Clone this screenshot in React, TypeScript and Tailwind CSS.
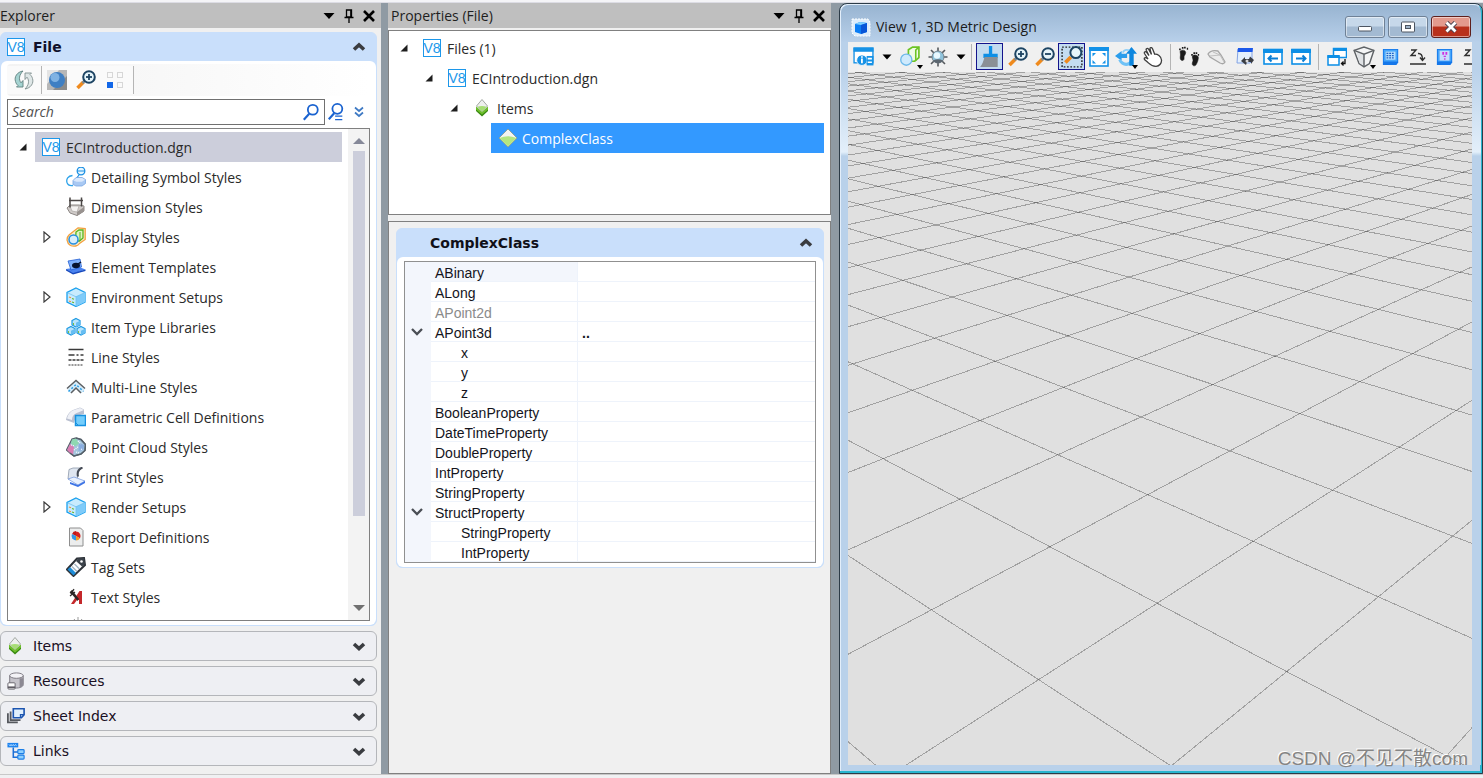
import React from "react";

type Kids = { children: React.ReactNode };

const ui = "font-['Open_Sans','Noto_Sans',sans-serif]";

function Svg({ size = "size-5", box = "0 0 20 20", children }: { size?: string; box?: string } & Kids) {
  return (
    <svg viewBox={box} className={`${size} shrink-0`} fill="none" aria-hidden="true">
      {children}
    </svg>
  );
}

function V8Icon() {
  return (
    <span className="flex size-[18px] shrink-0 items-center justify-center overflow-hidden border border-[#1c97ea] bg-white font-['Liberation_Sans',sans-serif] text-[14px] font-normal leading-none text-[#1c97ea]">
      V8
    </span>
  );
}

function ItemsIcon() {
  return (
    <Svg box="0 0 16 20" size="h-5 w-4">
      <path d="M2 9.500l6 4.500 6-4.500v3.500l-6 5.500L2 13z" fill="#3a8a12" />
      <path d="M2 8.500l6 5 6-5v3l-6 5-6-5z" fill="#6fc02c" />
      <path d="M8 1.500l5.500 6.500L8 13.500 2.500 8z" fill="#eef0ee" stroke="#a3a8a3" />
      <path d="M3.500 8.800Q8 7 12.500 8.800L8 13.500z" fill="#a6de73" />
    </Svg>
  );
}

function ClassIcon() {
  return (
    <Svg>
      <path d="M10 1l9 9-9 9-9-9z" fill="#f3f4f2" stroke="#83907a" strokeWidth=".7" />
      <path d="M1.500 10Q10 6.500 18.500 10L10 18.500z" fill="#b4e681" />
    </Svg>
  );
}

function Magnifier({ sign }: { sign?: "plus" | "minus" }) {
  return (
    <>
      <path d="M7.500 12L1.500 18" stroke="#ef8a1d" strokeWidth="3.600" />
      <path d="M9 10.500L6.500 13" stroke="#7d8b96" strokeWidth="2.500" />
      <circle cx="13" cy="7" r="5.800" fill="#e6f5fb" stroke="#1d4463" strokeWidth="2" />
      {sign && <path d="M10 7h6" stroke="#1d4463" strokeWidth="1.800" />}
      {sign === "plus" && <path d="M13 4v6" stroke="#1d4463" strokeWidth="1.800" />}
    </>
  );
}

function CubeIcon() {
  return (
    <Svg>
      <path d="M10 1l9 4.500v9.500l-9 4.500L1 15V5.500z" fill="#c8ebfd" stroke="#1aa0ee" strokeWidth="1.300" />
      <path d="M10 9.500L19 5.500V15l-9 4.500z" fill="#7fcbf9" />
      <path d="M1.500 5.800l8.500 4 8.500-4M10 9.800V19" stroke="#6fc0f0" strokeWidth=".8" />
      <path d="M3 10l2 .8M3 14l2 .8" stroke="#ef9240" strokeWidth="1.200" />
      <path d="M6 11.500l2 .8M6 15l2 .8" stroke="#67b52b" strokeWidth="1.200" />
    </Svg>
  );
}

function SmallCube({ x, y }: { x: number; y: number }) {
  return (
    <g transform={`translate(${x} ${y})`}>
      <path d="M5 .5l4 2v4.500l-4 2-4-2V2.500z" fill="#b9e4fb" stroke="#1a98e2" strokeWidth="1.200" />
      <path d="M5 4.800l4-2v4.200l-4 2z" fill="#66bdf2" />
      <path d="M2.500 5v2" stroke="#7cc142" />
    </g>
  );
}

const treeIcons: Record<string, React.ReactNode> = {
  detailing: (
    <Svg>
      <path d="M6.500 8.500C2 9 0 12 1 15.500c.8 2.500 3 3.500 6 3" stroke="#2ea3ea" strokeWidth="1.300" />
      <circle cx="15" cy="4" r="3.800" fill="#e6f6ff" stroke="#1a8fe3" strokeWidth="1.300" />
      <path d="M11.500 4h7M13 8l-3 4" stroke="#1a8fe3" strokeWidth="1.200" />
      <path d="M7 13.500l3-3h6l3.500 2v4l-3.500 2.500H10l-3-1.500z" fill="#a9c9f3" stroke="#7aa7e2" strokeWidth=".8" />
      <path d="M7.500 13.500l3-2.500h5.500l3 1.800-3 2h-5.500z" fill="#dbe9fc" />
    </Svg>
  ),
  dimension: (
    <Svg>
      <path d="M1 11l3-3h9l5 1v5l-7 4.500L4 16z" fill="#cfcac8" stroke="#8d8885" />
      <path d="M4 9h9l-2 6-5-1z" fill="#f4f2f1" stroke="#a29d9b" strokeWidth=".6" />
      <path d="M11 15v4l7-4.500V10z" fill="#98928f" />
      <path d="M4 .5v10M15.500.5v9M3 3.500h14" stroke="#4b4746" strokeWidth="1.500" />
    </Svg>
  ),
  display: (
    <Svg>
      <path d="M12 .8l7.200.700v11l-5.700 4C12 19 8 20 4.500 18.500.500 16 0 11 3 8z" fill="#fdeccf" stroke="#f2a13e" strokeWidth="1.300" />
      <path d="M10 5l3-2h4v8l-3.500 3h-4z" fill="#ddf4c5" stroke="#58b41c" strokeWidth="1.300" />
      <path d="M14 5v9" stroke="#58b41c" />
      <circle cx="7.500" cy="12.500" r="4.500" fill="#d8eefc" stroke="#258fe0" strokeWidth="1.500" />
    </Svg>
  ),
  element: (
    <Svg>
      <path d="M0 12l13-2 6.500 2.500L7 17z" fill="#4a83ef" />
      <path d="M0 12l7 4v1.500L0 13.500zM7 16l12.500-3.500V14L7 17.500z" fill="#1648bd" />
      <path d="M2 4l12-2 1.500 8L5 13z" fill="#7fb1fb" stroke="#2460d4" strokeWidth=".8" />
      <ellipse cx="10" cy="8.500" rx="4" ry="2.800" fill="#08142f" />
      <path d="M9 9l6-4" stroke="#08142f" strokeWidth="1.500" />
    </Svg>
  ),
  cube: <CubeIcon />,
  itemType: (
    <Svg>
      <SmallCube x={5} y={1} />
      <SmallCube x={0} y={9} />
      <SmallCube x={10} y={9} />
    </Svg>
  ),
  line: (
    <Svg>
      <path d="M2.500 2.500h15" stroke="#3a3a3a" strokeWidth="1.500" />
      <path d="M2.500 8h15" stroke="#3a3a3a" strokeWidth="1.500" strokeDasharray="6 2 2 2" />
      <path d="M2.500 13h15" stroke="#3a3a3a" strokeWidth="1.500" strokeDasharray="3 1" />
      <path d="M2.500 18h15" stroke="#777" strokeWidth="1.500" strokeDasharray="2 1" />
    </Svg>
  ),
  multi: (
    <Svg>
      <path d="M3 14.500L10 7.500l7 7" stroke="#d5ecfa" strokeWidth="5" />
      <path d="M1 11.500l9-8 9 8" stroke="#5b5f62" strokeWidth="1.500" />
      <path d="M5 16l5-5 5 5" stroke="#5b5f62" strokeWidth="1.500" />
      <path d="M2.500 14.500L10 7.500l7.500 7" stroke="#2b9de4" strokeWidth="1.500" strokeDasharray="2 2" />
    </Svg>
  ),
  parametric: (
    <Svg>
      <path d="M0 13c1-5 3-8 7-10l7-2.500 4 2V7l-8 2-2 7z" fill="#b9bfd0" />
      <path d="M1 11.500C2 7 5 4 8 3l6-2 4 2-6 2.500C8 7 6 9 6 13z" fill="#eef0f6" />
      <rect x="9.500" y="8.500" width="10" height="10" fill="#74cdfb" stroke="#1691e0" strokeWidth="1.500" />
      <path d="M9.500 15.500l3 3" stroke="#1691e0" />
    </Svg>
  ),
  cloud: (
    <Svg>
      <path d="M10 1l5 1.500 4.500 5-.500 6-4 3.500-7 2-4-3-3.500-3 3-6L6 2z" fill="#a5c6dd" stroke="#55606a" strokeWidth="1.300" />
      <path d="M1 13l3-6 4 3-1 8-3-2z" fill="#d97fb4" />
      <path d="M6 2.500l4-1 3 5-4 3-4-3z" fill="#8fd8b1" />
      <path d="M13 6l5 2-.5 5-5 1z" fill="#8aaee0" />
      <path d="M5 8l4 1M8 13l4-3M12 4l3 3M10 15l3 1M15 12l2 1" stroke="#fff" strokeWidth="1.200" strokeDasharray="1 1" />
      <path d="M10 1l5 1.500 4.500 5-.500 6-4 3.500-7 2-4-3" stroke="#55606a" strokeWidth="1.500" />
    </Svg>
  ),
  print: (
    <Svg>
      <path d="M3 2.500L7 1h9c-3 2-5 5-4 9l-3 3-7-1z" fill="#dfe6f0" stroke="#8c97a8" strokeWidth=".8" />
      <path d="M16.500.5c-4 1.500-5.500 5-4.500 9" stroke="#454b55" strokeWidth="2" />
      <path d="M2 12l6-2 11 4-7 4z" fill="#e9f1fd" stroke="#7d9ee0" strokeWidth=".8" />
      <path d="M4 15l8 3 7-4v2l-7 4-8-3z" fill="#3d74e6" />
    </Svg>
  ),
  report: (
    <Svg>
      <path d="M3.500 1h11l2.500 2.500V19H3.500z" fill="#eceded" stroke="#8e8e8e" />
      <path d="M10 9V4.500a4.500 4.500 0 0 1 3.900 6.700z" fill="#d5221f" />
      <path d="M10 9l-3.900-2A4.500 4.500 0 0 1 10 4z" fill="#c01818" />
      <path d="M10 9l4 2.300A4.500 4.500 0 0 1 10 13.500z" fill="#f29c28" />
      <path d="M10 9v4.500A4.500 4.500 0 0 1 6 7z" fill="#2f97e5" />
    </Svg>
  ),
  tag: (
    <Svg>
      <path d="M11 1.500l7-.5 1 7L7.500 19 1 12.500z" fill="#fff" stroke="#2d3238" strokeWidth="2" />
      <path d="M1.500 12.500L4 10l6 6-2.500 2.500z" fill="#1d8bd6" />
      <path d="M6 9.500l5 5M8.500 7l5 5" stroke="#a9b8c4" strokeWidth="1.500" />
      <path d="M12 1.500l6-.5 1 6-3 2.500L10 4z" fill="#3b424a" />
      <circle cx="15.500" cy="4.500" r="1.300" fill="#fff" />
    </Svg>
  ),
  text: (
    <Svg>
      <path d="M5 17l8.500-13H16v13h-3v-4h-2L8 17z" fill="#c4282b" />
      <path d="M4 5l2-2 7 9-1.500 2z" fill="#2b2727" />
      <path d="M4 6l4-3.500M4 9l5-4M8 2L5 7" stroke="#2b2727" strokeWidth="1.200" />
    </Svg>
  ),
};

const explorerRows: { label: string; icon: string; branch?: boolean }[] = [
  { label: "Detailing Symbol Styles", icon: "detailing" },
  { label: "Dimension Styles", icon: "dimension" },
  { label: "Display Styles", icon: "display", branch: true },
  { label: "Element Templates", icon: "element" },
  { label: "Environment Setups", icon: "cube", branch: true },
  { label: "Item Type Libraries", icon: "itemType" },
  { label: "Line Styles", icon: "line" },
  { label: "Multi-Line Styles", icon: "multi" },
  { label: "Parametric Cell Definitions", icon: "parametric" },
  { label: "Point Cloud Styles", icon: "cloud" },
  { label: "Print Styles", icon: "print" },
  { label: "Render Setups", icon: "cube", branch: true },
  { label: "Report Definitions", icon: "report" },
  { label: "Tag Sets", icon: "tag" },
  { label: "Text Styles", icon: "text" },
];

function OpenArrow() {
  return (
    <Svg size="size-2" box="0 0 8 8">
      <path d="M7.500.5v7h-7z" fill="#1e1e1e" />
    </Svg>
  );
}

function ClosedArrow() {
  return (
    <Svg size="h-3 w-2" box="0 0 8 12">
      <path d="M1 1l6 5-6 5z" stroke="#3c3c3c" strokeWidth="1.200" fill="#fff" />
    </Svg>
  );
}

function SectionChevron({ up }: { up?: boolean }) {
  return (
    <Svg size="h-3 w-[14px]" box="0 0 14 12">
      <path d={up ? "M2 8.500l5-4.500 5 4.500" : "M2 4l5 4.500L12 4"} stroke="#3a3c40" strokeWidth="3.600" />
    </Svg>
  );
}

function DockTitle({ children }: Kids) {
  return (
    <header className="flex h-[25px] shrink-0 items-center bg-[#bfbfbf] pr-1.5">
      <h2 className="flex-1 text-[14px] leading-6 text-[#1e1e1e]">{children}</h2>
      <div className="flex items-center gap-2">
        <button aria-label="Window options">
          <Svg size="h-3 w-3" box="0 0 12 12">
            <path d="M.500 3h11L6 9z" fill="#000" />
          </Svg>
        </button>
        <button aria-label="Auto hide">
          <Svg size="h-4 w-3" box="0 0 12 16">
            <path d="M3.500 2h5v7h-5zM1.500 9.500h9M6 10v5M7.800 2v7" stroke="#000" strokeWidth="1.300" />
          </Svg>
        </button>
        <button aria-label="Close">
          <Svg size="size-3" box="0 0 12 12">
            <path d="M1 1l10 10M11 1L1 11" stroke="#000" strokeWidth="2.600" />
          </Svg>
        </button>
      </div>
    </header>
  );
}

function Explorer() {
  const sections: { label: string; icon: React.ReactNode }[] = [
    { label: "Items", icon: <ItemsIcon /> },
    {
      label: "Resources",
      icon: (
        <Svg size="size-[18px]">
          <path d="M3 4v11c0 4 15 4 15-1V4z" fill="#c5c3ca" stroke="#77747d" />
          <ellipse cx="10.500" cy="4" rx="7.500" ry="3" fill="#f3f2f6" stroke="#77747d" />
          <path d="M14 7h4v8l-4 2.500z" fill="#8b8892" />
          <rect x="1" y="12" width="8" height="7" rx="1" fill="#fff" stroke="#5e5b63" />
          <path d="M1 17h8" stroke="#5e5b63" strokeWidth="2" />
        </Svg>
      ),
    },
    {
      label: "Sheet Index",
      icon: (
        <Svg size="size-[18px]">
          <path d="M1 7v10h11M4 5v9.500h11" stroke="#55585e" strokeWidth="2" />
          <path d="M7 2h12v6.500L16 12H7z" fill="#e1f0fd" stroke="#1c55b0" strokeWidth="1.800" />
          <path d="M15 12V8.500h4" stroke="#1c55b0" strokeWidth="1.500" />
        </Svg>
      ),
    },
    {
      label: "Links",
      icon: (
        <Svg size="size-[18px]">
          <rect x=".500" y="1" width="12" height="5" fill="#1c82ee" />
          <path d="M2 2.500l1.500 2 1-2 1 2 1.500-2 1 2 1.500-2 1 2" stroke="#bfe0ff" strokeWidth=".8" />
          <path d="M7 6v11h6M7 11h6" stroke="#1c6fd6" strokeWidth="1.700" />
          <rect x="12" y="8.500" width="7" height="4.500" rx="1" fill="#8fd1ff" stroke="#1c7ee6" strokeWidth="1.300" />
          <rect x="12" y="14.500" width="7" height="4.500" rx="1" fill="#8fd1ff" stroke="#1c7ee6" strokeWidth="1.300" />
        </Svg>
      ),
    },
  ];
  return (
    <aside className="flex w-[381px] shrink-0 flex-col bg-[#f0f0f0]">
      <DockTitle>Explorer</DockTitle>
      <div className="flex min-h-0 flex-1 flex-col gap-[5px] pt-1 pr-1 pb-2">
        <section className="flex min-h-0 flex-1 flex-col rounded-md border border-[#c9dffb] bg-[#c9dffb]">
          <button className="flex h-7 shrink-0 items-center gap-2 pr-2.5 pl-1.5 font-['DejaVu_Sans',sans-serif] text-[14px] font-bold text-[#10102a]">
            <V8Icon />
            <span className="flex-1 text-left">File</span>
            <SectionChevron up />
          </button>
          <div className="flex min-h-0 flex-1 flex-col gap-[3px] rounded-md bg-white px-1.5 pt-[3px] pb-1">
            <div className="flex h-8 shrink-0 items-center rounded bg-linear-to-r from-[#f3f3f3] to-white">
              <button aria-label="Refresh" className="flex h-7 w-[35px] items-center justify-center border-r border-[#b5b5b5] bg-[#fafafa]">
                <Svg>
                  <path d="M9 1C3 2 0 7 1.500 11.500c.5 2 1.500 3 2.500 4L2.500 17H9v-6.500l-2 2.300C4.500 9.500 5 5 9 1z" fill="#a5d3d1" stroke="#5f7f7e" strokeWidth=".9" />
                  <path d="M11 19c6-1 9-6 7.500-10.500-.5-2-1.500-3-2.500-4L17.500 3H11v6.500l2-2.300c2.500 3.300 2 7.800-2 11.800z" fill="#dfe7e7" stroke="#7f8f8f" strokeWidth=".9" />
                </Svg>
              </button>
              <div className="flex h-7 items-center gap-[9px] border-r border-[#b5b5b5] bg-[#fafafa] pr-2 pl-[5px]">
                <button aria-label="Globe">
                  <Svg>
                    <rect width="20" height="20" fill="#b7b7b7" />
                    <path d="M0 0h12L0 14z" fill="#e4e4e4" />
                    <path d="M20 6v14H6z" fill="#8b8b8b" />
                    <circle cx="10" cy="10" r="8" fill="#3f7fc3" />
                    <circle cx="8" cy="7.500" r="4.500" fill="#7fb2e3" />
                  </Svg>
                </button>
                <button aria-label="Zoom to element">
                  <Svg>
                    <Magnifier sign="plus" />
                  </Svg>
                </button>
                <button aria-label="Layout">
                  <Svg>
                    <path d="M2.500 2.500h5v5h-5zM12.500 2.500h5v5h-5zM12.500 12.500h5v5h-5z" stroke="#b5b5b5" strokeDasharray="1 1" />
                    <rect x="2" y="12" width="6" height="6" fill="#1267e8" />
                  </Svg>
                </button>
              </div>
            </div>
            <div className="flex h-[26px] shrink-0 items-center">
              <label className="flex h-full w-[318px] items-center border border-[#707070] bg-white px-1">
                <input aria-label="Search" placeholder="Search" className="h-full min-w-0 flex-1 pb-0.5 text-[14px] italic outline-none placeholder:text-[#505050]" />
                <Svg size="size-[18px]">
                  <circle cx="12" cy="7.500" r="5.500" stroke="#1a63d0" strokeWidth="2" />
                  <path d="M8 12l-6 6.500" stroke="#1a63d0" strokeWidth="2.400" />
                </Svg>
              </label>
              <button aria-label="Advanced search" className="pl-0.5">
                <Svg size="size-[18px]">
                  <circle cx="11.500" cy="6.500" r="5.500" stroke="#1a63d0" strokeWidth="2" />
                  <path d="M8 11.500l-6 6.500" stroke="#1a63d0" strokeWidth="2.400" />
                  <path d="M9 14.500h8M9 18.500h8" stroke="#1a63d0" strokeWidth="1.500" />
                </Svg>
              </button>
              <button aria-label="More" className="pl-2">
                <Svg size="h-3 w-3" box="0 0 12 12">
                  <path d="M2 1.500l4 3.500 4-3.500M2 6.500L6 10l4-3.500" stroke="#3f7ac4" strokeWidth="1.700" />
                </Svg>
              </button>
            </div>
            <div className="flex min-h-0 flex-1 border border-[#808080]">
              <ul className="min-w-0 flex-1 overflow-hidden pt-[3px] text-[14px] text-[#2a2a2a]">
                <li className="flex h-[30px] items-center pr-1.5 pl-[11px]">
                  <OpenArrow />
                  <span className="ml-2 flex h-[30px] flex-1 items-center gap-1.5 bg-[#cccedb] pl-[7px]">
                    <V8Icon />
                    ECIntroduction.dgn
                  </span>
                </li>
                {explorerRows.map((row) => (
                  <li key={row.label} className="flex h-[30px] items-center pl-[35px]">
                    <span className="flex w-[23px] items-center">{row.branch && <ClosedArrow />}</span>
                    {treeIcons[row.icon]}
                    <span className="ml-[5px]">{row.label}</span>
                  </li>
                ))}
                <li className="flex h-[30px] items-start pt-1 pl-[60px]">
                  <Svg>
                    <path d="M10 1v5M6 3l3 4M14 3l-3 4" stroke="#9a9a9a" />
                    <circle cx="10" cy="11" r="5" stroke="#9a9a9a" />
                  </Svg>
                </li>
              </ul>
              <div className="flex w-[21px] flex-col items-center bg-[#f3f3f3] py-1.5">
                <Svg size="h-3 w-3" box="0 0 12 12">
                  <path d="M6 3l6 6H0z" fill="#868999" />
                </Svg>
                <div className="flex w-3 flex-1 flex-col pt-1">
                  <div className="basis-[81%] bg-[#cccedb]" />
                </div>
                <Svg size="h-3 w-3" box="0 0 12 12">
                  <path d="M6 9L0 3h12z" fill="#707070" />
                </Svg>
              </div>
            </div>
          </div>
        </section>
        {sections.map((s) => (
          <button
            key={s.label}
            className="flex h-[30px] shrink-0 items-center rounded-md border border-[#b4b6ba] bg-[#eeeff3] pr-2.5 pl-1.5 text-left font-['DejaVu_Sans',sans-serif] text-[14px] text-[#1a1024]"
          >
            <span className="flex w-[26px]">{s.icon}</span>
            <span className="flex-1">{s.label}</span>
            <SectionChevron />
          </button>
        ))}
      </div>
    </aside>
  );
}

type Prop = { name: string; child?: boolean; open?: boolean; muted?: boolean; value?: string };

const props: Prop[] = [
  { name: "ABinary" },
  { name: "ALong" },
  { name: "APoint2d", muted: true },
  { name: "APoint3d", open: true, value: ".." },
  { name: "x", child: true },
  { name: "y", child: true },
  { name: "z", child: true },
  { name: "BooleanProperty" },
  { name: "DateTimeProperty" },
  { name: "DoubleProperty" },
  { name: "IntProperty" },
  { name: "StringProperty" },
  { name: "StructProperty", open: true },
  { name: "StringProperty", child: true },
  { name: "IntProperty", child: true },
];

function Properties() {
  return (
    <section className="flex w-[443px] shrink-0 flex-col bg-[#f0f0f0]">
      <DockTitle>
        <span className="pl-[3px]">Properties (File)</span>
      </DockTitle>
      <ul className="mt-0.5 h-[185px] shrink-0 border border-[#808080] bg-white pt-0.5 pr-1.5 text-[14px] text-[#2a2a2a]">
        <li className="flex h-[30px] items-center gap-1.5 pl-[11px]">
          <OpenArrow />
          <span className="ml-[9px]">
            <V8Icon />
          </span>
          Files (1)
        </li>
        <li className="flex h-[30px] items-center gap-1.5 pl-9">
          <OpenArrow />
          <span className="ml-[9px]">
            <V8Icon />
          </span>
          ECIntroduction.dgn
        </li>
        <li className="flex h-[30px] items-center gap-1.5 pl-[61px]">
          <OpenArrow />
          <span className="ml-[9px] flex w-[18px] justify-center">
            <ItemsIcon />
          </span>
          Items
        </li>
        <li className="flex h-[30px] pl-[102px]">
          <span className="flex flex-1 items-center gap-1 bg-[#3399ff] pl-[7px] text-white">
            <ClassIcon />
            ComplexClass
          </span>
        </li>
      </ul>
      <div className="mt-[6px] flex-1 border border-[#808080] py-1.5 pr-1.5 pl-[7px]">
        <section className="rounded-md border border-[#c9dffb] bg-[#c9dffb]">
          <button className="flex h-7 w-full items-center pr-2.5 pl-[33px] font-['DejaVu_Sans',sans-serif] text-[14px] font-bold text-[#101018]">
            <span className="flex-1 text-left">ComplexClass</span>
            <SectionChevron up />
          </button>
          <div className="rounded-md bg-white px-[7px] py-1">
            <div className="border border-[#909090]">
              <table className="w-full table-fixed border-separate border-spacing-0 font-['Liberation_Sans',sans-serif] text-[14px] text-[#14141c]">
                <colgroup>
                  <col className="w-[26px]" />
                  <col className="w-[147px]" />
                  <col />
                </colgroup>
                <tbody>
                  {props.map((p, i) => (
                    <tr key={i} className="h-5">
                      <td className="bg-[#f3f6fc] p-0 pl-1.5">
                        {p.open && (
                          <Svg size="h-2.5 w-3" box="0 0 12 10">
                            <path d="M1 2l5 5 5-5" stroke="#4a4e55" strokeWidth="2.300" />
                          </Svg>
                        )}
                      </td>
                      <th
                        scope="row"
                        className={`border-r border-b border-[#eef3fb] p-0 pt-px text-left font-normal ${p.child ? "pl-[30px]" : "pl-1"} ${p.muted ? "text-[#8a8a8a]" : ""} ${i === 0 ? "bg-[#f3f6fc]" : ""}`}
                      >
                        <span className="block h-[18px] leading-5">{p.name}</span>
                      </th>
                      <td className="border-b border-[#eef3fb] p-0 pl-1 font-bold">
                        {p.value && <span className="block h-[18px] leading-5">{p.value}</span>}
                      </td>
                    </tr>
                  ))}
                </tbody>
              </table>
            </div>
          </div>
        </section>
      </div>
    </section>
  );
}

/** Ground grid: both line families meet the horizon at their own vanishing point. */
const HORIZON = -50;
const project = (a: number, b: number) => {
  const w = 0.0013705 + 0.000145 * a + 0.0001603 * b;
  return { x: (1.4234 - 0.0118 * a + 0.3479 * b) / w, y: HORIZON + 1 / w };
};
const ray = (vx: number, p: { x: number; y: number }) => {
  const at = (y: number) => vx + ((p.x - vx) * (y - HORIZON)) / (p.y - HORIZON);
  return `M${at(72).toFixed(2)} 72L${at(790).toFixed(2)} 790`;
};

function GroundGrid() {
  const lines: string[] = [];
  for (let i = -3; i <= 44; i++) {
    lines.push(ray(-0.0118 / 0.000145, project(0, i)));
    lines.push(ray(0.3479 / 0.0001603, project(i, 0)));
  }
  return (
    <svg viewBox="848 72 624 693" preserveAspectRatio="xMinYMin slice" className="block size-full" fill="none" shapeRendering="crispEdges" aria-hidden="true">
      {lines.map((d) => (
        <path key={d} d={d} stroke="#000" strokeOpacity=".28" />
      ))}
    </svg>
  );
}

function Tool({ label, active, menu, children }: { label: string; active?: boolean; menu?: boolean } & Kids) {
  return (
    <button
      aria-label={label}
      className={`relative flex h-[27px] w-[27px] shrink-0 items-center justify-center ${active ? "border border-[#14148c] bg-[#c4dcf0]" : ""}`}
    >
      {children}
      {menu && (
        <svg viewBox="0 0 6 4" className="absolute right-px bottom-px h-1 w-1.5" aria-hidden="true">
          <path d="M0 0h6L3 4z" fill="#000" />
        </svg>
      )}
    </button>
  );
}

const Caret = () => (
  <button aria-label="Options" className="flex w-3 shrink-0 justify-center">
    <Svg size="h-3 w-2.5" box="0 0 10 12">
      <path d="M.500 3.500h9L5 8.500z" fill="#000" />
    </Svg>
  </button>
);

const Rule = () => <span className="mx-1 h-[26px] w-px shrink-0 bg-[#b4b4b4]" />;

function Pager({ left }: { left?: boolean }) {
  return (
    <Svg>
      <rect x="1" y="2.500" width="18" height="14.500" fill="#fff" stroke="#0d8fe6" strokeWidth="1.600" />
      <path d="M0 4h20" stroke="#0d8fe6" strokeWidth="4" />
      <path d={left ? "M5 11.500h10M8.500 8.500l-3 3 3 3" : "M5 11.500h10M11.500 8.500l3 3-3 3"} stroke="#0a7fd6" strokeWidth="2" />
    </Svg>
  );
}

function ClipZ() {
  return (
    <Svg>
      <path d="M3 3h5L3 8.500h5" stroke="#2f2f2f" strokeWidth="1.400" />
      <path d="M10 6.500c3-.3 4.500 1.500 4.500 6M12 10.500l2.500 3 2.500-3" stroke="#2f2f2f" strokeWidth="1.400" />
      <path d="M2 17h16" stroke="#2f2f2f" strokeWidth="1.500" />
    </Svg>
  );
}

function ViewToolbar() {
  return (
    <div className="flex h-[30px] shrink-0 items-center overflow-hidden bg-[#f0f0f0] pb-px pl-0.5">
      <Tool label="View attributes">
        <Svg size="size-[21px]">
          <rect x="1" y="2" width="18" height="14" fill="#fff" stroke="#1692e6" strokeWidth="1.300" />
          <path d="M.500 3.500h19" stroke="#1692e6" strokeWidth="4" />
          <circle cx="8.500" cy="13.500" r="5" fill="#1692e6" stroke="#fff" strokeWidth=".8" />
          <path d="M8.500 12v4.500M8.500 9.800v1.300" stroke="#fff" strokeWidth="1.700" />
          <rect x="13" y="9.500" width="6.500" height="9" fill="#1692e6" />
          <path d="M14 12h4M14 15.500h4" stroke="#fff" strokeWidth="1.600" />
        </Svg>
      </Tool>
      <span className="ml-1 flex">
        <Caret />
      </span>
      <span className="ml-1 flex">
        <Tool label="Display style" menu>
          <Svg size="size-[21px]">
            <path d="M8 3.500L12 1h6v10l-4 3.500H8z" fill="#f0fae6" stroke="#6cc424" strokeWidth="1.600" />
            <path d="M15 14V4l3-3" stroke="#6cc424" strokeWidth="1.500" />
            <circle cx="6" cy="13" r="5.300" fill="#cfeafd" stroke="#6db9ea" strokeWidth="1.300" />
          </Svg>
        </Tool>
      </span>
      <Tool label="Adjust brightness">
        <Svg>
          <path d="M10 .5v19M.500 10h19M3 3l14 14M17 3L3 17" stroke="#55595d" strokeWidth="1.600" />
          <circle cx="10" cy="10" r="6" fill="#8fc3dc" stroke="#75838c" />
          <path d="M5 13.500a6 6 0 0 0 10 0Q10 11 5 13.500z" fill="#5c6670" />
          <circle cx="9" cy="8.500" r="3.200" fill="#e9f9ff" />
        </Svg>
      </Tool>
      <span className="ml-1 flex">
        <Caret />
      </span>
      <Rule />
      <Tool label="Update view" active>
        <Svg size="size-[22px]">
          <path d="M9 0h3v7h5v4H4V7h5z" fill="#0d8fe6" />
          <path d="M5 10h12v9H1c2-2 3-5 4-9z" fill="#8a9096" />
        </Svg>
      </Tool>
      <div className="ml-px flex">
        <Tool label="Zoom in">
          <Svg>
            <Magnifier sign="plus" />
          </Svg>
        </Tool>
        <Tool label="Zoom out">
          <Svg>
            <Magnifier sign="minus" />
          </Svg>
        </Tool>
        <Tool label="Window area" active>
          <Svg size="size-[22px]">
            <rect x="1" y="1" width="18" height="18" stroke="#222" strokeWidth="1.300" strokeDasharray="1.500 1.500" />
            <path d="M9 10L4 15" stroke="#ef8a1d" strokeWidth="3.400" />
            <circle cx="13.500" cy="6" r="5" fill="#e6f5fb" stroke="#1d4463" strokeWidth="1.800" />
          </Svg>
        </Tool>
        <Tool label="Fit view">
          <Svg>
            <rect x="1" y="1" width="18" height="18" fill="#fff" stroke="#1492e8" strokeWidth="1.600" />
            <path d="M0 2h20" stroke="#1492e8" strokeWidth="4" />
            <path d="M3.500 6h3.500l-3.500 3.500zM16.500 6H13l3.500 3.500zM3.500 16.500h3.500L3.500 13zM16.500 16.500H13l3.500-3.500z" fill="#1492e8" />
          </Svg>
        </Tool>
        <Tool label="Rotate view" menu>
          <Svg size="size-[22px]">
            <path d="M0 9l6-4.500V7h5v4H6v2.500z" fill="#2a9dec" />
            <path d="M5 12c3 4 7 4 9 1l2 2c-4 5-10 4-13-2z" fill="#6fc2f6" />
            <path d="M15 1l5 6h-3v11h-4V7h-3z" fill="#0d86de" />
            <path d="M13 4c-3-1-5 0-6 2" stroke="#8dcff8" strokeWidth="1.500" />
          </Svg>
        </Tool>
        <Tool label="Pan view">
          <Svg>
            <path d="M5 12L1.500 6.500C.8 4.800 2.800 4 3.700 5.500L6 8.500 3.300 3.300C2.600 1.500 4.700.7 5.600 2.300L8.500 7.500 7 2.300c-.4-1.900 1.800-2.300 2.500-.6l2.200 5.500C14.500 7 18 9 18.500 13c.3 3-2 6.300-5.500 6.300-4.500 0-6-1.800-8-3.800L1.500 12.500c-.8-1.500 1-2.300 2-1.500z" fill="#fff" stroke="#3d3d3d" strokeWidth="1.300" />
          </Svg>
        </Tool>
      </div>
      <Rule />
      <div className="flex gap-px">
        <Tool label="Walk">
          <Svg size="size-[22px]">
            <path d="M2 6c-1-3 5-3 5 0 0 2-2 3-1.500 5 .5 3-3.500 3-3.500 0C2 9 2.500 8 2 6zM13 10c0-3 6-2 5.500 1-.3 2-.5 3-1.500 5-1 3-4.500 2.500-4-.5.3-1.500 1-2 .5-3.500z" fill="#1b1b1b" stroke="#1b1b1b" strokeWidth=".5" />
            <path d="M1 3h1.500M3.500 1.800H5M5.500 1.500H7M8 2.500h1.200M12 8h1.500M14 6.500h1.500M16 6.500h1.500M18 8h1.200" stroke="#1b1b1b" strokeWidth="1.600" />
          </Svg>
        </Tool>
        <Tool label="Fly">
          <Svg>
            <path d="M1 7c2-3 6-4 10-3l3 4 4 7c-1 2-3 2-5 1L3 10z" fill="#ececec" stroke="#a5a5a5" strokeWidth="1.300" />
            <path d="M3 9l10-1 4 7M6 5l7 3" stroke="#c0c0c0" />
          </Svg>
        </Tool>
        <Tool label="Navigate view">
          <Svg>
            <path d="M3 2h14v12l-2 2H2z" fill="#e4f0fd" stroke="#83a3e4" />
            <path d="M3 1h15l-.5 4h-15z" fill="#1b58ea" />
            <path d="M6 14l4-4v2h4l1-2.500 4 3.500-3 4v-2h-4l-1 3z" fill="#3a3d43" />
            <circle cx="12" cy="14" r="1.500" fill="#d8d8d8" />
          </Svg>
        </Tool>
        <Tool label="View previous">
          <Pager left />
        </Tool>
        <Tool label="View next">
          <Pager />
        </Tool>
      </div>
      <Rule />
      <div className="flex">
        <Tool label="Copy view">
          <Svg>
            <path d="M6.500 1.500h13v9h-13z" fill="#fff" stroke="#0d8fe6" strokeWidth="1.500" />
            <path d="M6 2.500h14" stroke="#0d8fe6" strokeWidth="3" />
            <path d="M1 9h11v9H1z" fill="#fff" stroke="#0d8fe6" strokeWidth="1.500" />
            <path d="M.500 9.500h12" stroke="#0d8fe6" strokeWidth="3" />
            <path d="M18 12v4.500h-3M16.500 14.500l-2 2 2 2" stroke="#111" strokeWidth="1.300" />
          </Svg>
        </Tool>
        <Tool label="View perspective" menu>
          <Svg size="size-[22px]">
            <path d="M1 4l9-3 9 3-4 12-5 3-4.500-3z" fill="#f4f5f6" stroke="#5e6266" strokeWidth="1.300" />
            <path d="M3 6l7 2v10l-4-2.500z" fill="#dfe2e5" />
            <path d="M1 4l9 3.500L19 4M10 7.500V19" stroke="#5e6266" strokeWidth="1.300" />
          </Svg>
        </Tool>
        <Tool label="Clip volume">
          <Svg size="size-[18px]">
            <path d="M1 1h17v15l-2 3H1z" fill="#1477ea" />
            <rect x="2" y="2" width="15" height="13" fill="#45a5fa" />
            <rect x="4" y="4" width="11" height="9" fill="#b5defc" />
            <path d="M5 6h9M5 8.500h9M5 11h9" stroke="#1e62c8" strokeWidth="1.300" strokeDasharray="2 1" />
          </Svg>
        </Tool>
        <Tool label="Set display depth">
          <ClipZ />
        </Tool>
        <Tool label="Show display depth">
          <Svg size="size-[18px]">
            <path d="M1 1h17v15l-2 3H1z" fill="#1477ea" />
            <rect x="2" y="2" width="15" height="13" fill="#45a5fa" />
            <rect x="4" y="3" width="11" height="11" fill="#c6dcfc" />
            <path d="M7 4.500h2v3H7zM10.500 4.500h2v3h-2zM8.500 8.500h2.500v1.500H8.500zM9 11.500h1.500V13H9z" fill="#cf2ee0" />
          </Svg>
        </Tool>
        <Tool label="Set active depth">
          <ClipZ />
        </Tool>
      </div>
    </div>
  );
}

function CaptionButton({ label, close, children }: { label: string; close?: boolean } & Kids) {
  return (
    <button
      aria-label={label}
      className={`flex h-[22px] w-10 items-center justify-center rounded-[3px] border ring-1 ring-white/50 ring-inset ${
        close ? "border-[#5e1f1c] bg-linear-to-b from-[#e39a8d] from-45% to-[#b8301b] to-50%" : "border-[#6f8196] bg-linear-to-b from-[#c6d8ea] from-45% to-[#a3bad2] to-50%"
      }`}
    >
      {children}
    </button>
  );
}

function ViewWindow() {
  return (
    <section className="relative flex min-w-0 flex-1 flex-col rounded-t-lg border border-[#2c3b47] bg-[#b9d1ea] shadow-[inset_-2px_-2px_0_#27b5cf,inset_1px_1px_0_#e3eefa]">
      <header className="mx-px mt-px flex h-[37px] shrink-0 items-center rounded-t-lg bg-linear-to-b from-[#98b4d1] to-[#b8d0ea] pt-[7px] pr-[10px] pl-[10px]">
        <Svg>
          <path d="M1 2h16l2 3v14H4l-3-3z" fill="#dcecfb" stroke="#fff" strokeDasharray="2 1" />
          <path d="M4 7l5-2 7 1v9l-6 2-6-2z" fill="#0a7df5" />
          <path d="M4 7l5-2 7 1-6 2z" fill="#7fd0ff" />
          <path d="M10 8l6-2v9l-6 2z" fill="#0755d8" />
        </Svg>
        <h1 className="ml-[5px] flex-1 truncate text-[14px] leading-5 text-[#1b1b1b]">View 1, 3D Metric Design</h1>
        <div className="flex gap-[3px]">
          <CaptionButton label="Minimize">
            <Svg size="h-3 w-4" box="0 0 16 12">
              <rect x="1.500" y="5.500" width="13" height="4.500" rx="1" fill="#fff" stroke="#4d5561" />
            </Svg>
          </CaptionButton>
          <CaptionButton label="Maximize">
            <Svg size="h-3 w-4" box="0 0 16 12">
              <rect x="1.500" y="1" width="13" height="10" rx="1" fill="#fff" stroke="#4d5561" />
              <rect x="5.500" y="4.500" width="5" height="3" fill="#9fb3c8" stroke="#4d5561" />
            </Svg>
          </CaptionButton>
          <CaptionButton label="Close view" close>
            <Svg size="h-3 w-4" box="0 0 16 12">
              <path d="M3.500 1.500l9 9M12.500 1.500l-9 9" stroke="#4b4350" strokeWidth="4.600" />
              <path d="M3.500 1.500l9 9M12.500 1.500l-9 9" stroke="#fff" strokeWidth="2.800" />
            </Svg>
          </CaptionButton>
        </div>
      </header>
      <div className="mx-px flex min-h-0 flex-1 flex-col bg-[linear-gradient(#b9d1ea_28px,#e3effa_110px,#b9d1ea_114px)] pr-[9px] pl-[7px]">
        <ViewToolbar />
        <div className="min-h-0 flex-1 overflow-hidden bg-[#e0e0e0]">
          <GroundGrid />
        </div>
      </div>
      <div className="h-2 shrink-0" />
      <p className="absolute right-3.5 bottom-0 font-['Liberation_Sans','Noto_Sans_CJK_SC',sans-serif] text-[19px] leading-7 text-[#858585] [text-shadow:-1px_-1px_0_#fff]">
        CSDN @不见不散com
      </p>
    </section>
  );
}

export default function App() {
  return (
    <div className={`flex h-screen flex-col bg-[#f4f4f7] ${ui}`}>
      <div className="h-[3px] shrink-0 border-b border-[#dcdce4]" />
      <main className="flex min-h-0 flex-1 bg-[#8f9aa3]">
        <Explorer />
        <div className="w-[7px] shrink-0" />
        <Properties />
        <div className="w-[8px] shrink-0" />
        <ViewWindow />
      </main>
      <footer className="h-1 shrink-0 border-t border-[#c8c8c8] bg-[#f0f0f2]" />
    </div>
  );
}
